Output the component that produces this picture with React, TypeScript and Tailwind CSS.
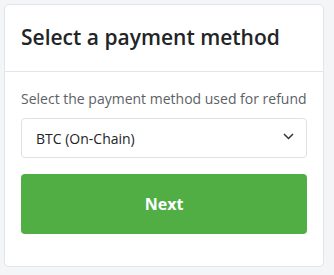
import React, { useState } from 'react';

export default function App() {
    const [method, setMethod] = useState('btc');

    return (
        <div className="min-h-screen bg-[#f4f5f7] p-1 font-['Open_Sans',sans-serif]">
            <div className="w-[320px] bg-white border border-[#e3e5e8] rounded-[5px]">
                {/* Header */}
                <div className="h-[67px] px-4 flex items-center border-b border-[#e3e5e8]">
                    <h1 className="text-[21px] font-semibold text-[#222426]">Select a payment method</h1>
                </div>

                {/* Body */}
                <div className="px-4 pt-[17px] pb-8 flex flex-col">
                    <p className="text-[14px] text-[#5d6166] leading-[19px]">Select the payment method used for refund</p>
                    <div className="relative mt-[10px]">
                        <select
                            value={method}
                            onChange={e => setMethod(e.target.value)}
                            className="appearance-none w-full h-[40px] pl-[14px] pr-8 border border-[#dfe1e4] rounded-[4px] bg-white text-[14px] text-[#222426] outline-none"
                        >
                            <option value="btc">BTC (On-Chain)</option>
                            <option value="ln">BTC (Lightning)</option>
                        </select>
                        <svg className="absolute right-[13px] top-[15px] pointer-events-none" width="11" height="7" viewBox="0 0 11 7" fill="none">
                            <path d="M1 1l4.5 4.5L10 1" stroke="#333" strokeWidth="1.5" />
                        </svg>
                    </div>
                    <button className="mt-[16px] h-[60px] w-full rounded-[4px] bg-[#51ae45] text-white text-[16px] font-bold">
                        Next
                    </button>
                </div>
            </div>
        </div>
    );
}
